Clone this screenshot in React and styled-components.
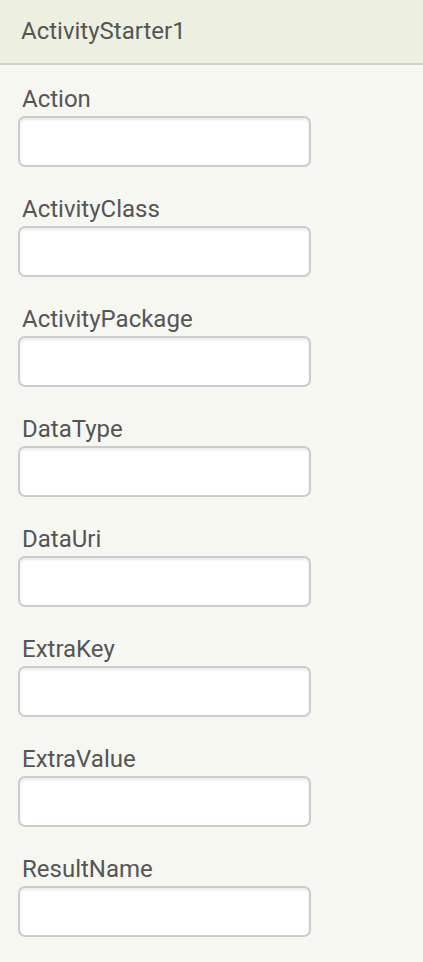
import React from "react";
import styled, { createGlobalStyle } from "styled-components";

const Global = createGlobalStyle`
  html, body { margin: 0; padding: 0; background: #f7f7f2; }
  body { font-family: Roboto, "Noto Sans", "Liberation Sans", sans-serif; }
  * { box-sizing: border-box; }
`;

const Panel = styled.div`
  width: 423px;
  min-height: 962px;
  background: #f7f7f2;
  display: flex;
  flex-direction: column;
`;

const Header = styled.div`
  height: 65px;
  background: #edf0e0;
  border-bottom: 2px solid #d0d0cc;
  display: flex;
  align-items: center;
  padding: 0 0 2px 21px;
  font-size: 24px;
  color: #555;
`;

const Body = styled.div`
  display: flex;
  flex-direction: column;
  gap: 28px;
  padding: 20px 0 25px 18px;
`;

const Field = styled.div`
  display: flex;
  flex-direction: column;
  gap: 3px;
`;

const Label = styled.label`
  font-size: 24px;
  line-height: 28px;
  color: #555;
  padding-left: 4px;
`;

const Input = styled.input`
  width: 293px;
  height: 51px;
  border: 2px solid #cccccc;
  border-radius: 7px;
  background: #fff;
  box-shadow: inset 0 2px 3px rgba(0, 0, 0, 0.08);
  outline: none;
  font: inherit;
`;

const fields = [
  "Action",
  "ActivityClass",
  "ActivityPackage",
  "DataType",
  "DataUri",
  "ExtraKey",
  "ExtraValue",
  "ResultName",
];

export default function App() {
  return (
    <Panel>
      <Global />
      <Header>ActivityStarter1</Header>
      <Body>
        {fields.map((f) => (
          <Field key={f}>
            <Label>{f}</Label>
            <Input type="text" />
          </Field>
        ))}
      </Body>
    </Panel>
  );
}
